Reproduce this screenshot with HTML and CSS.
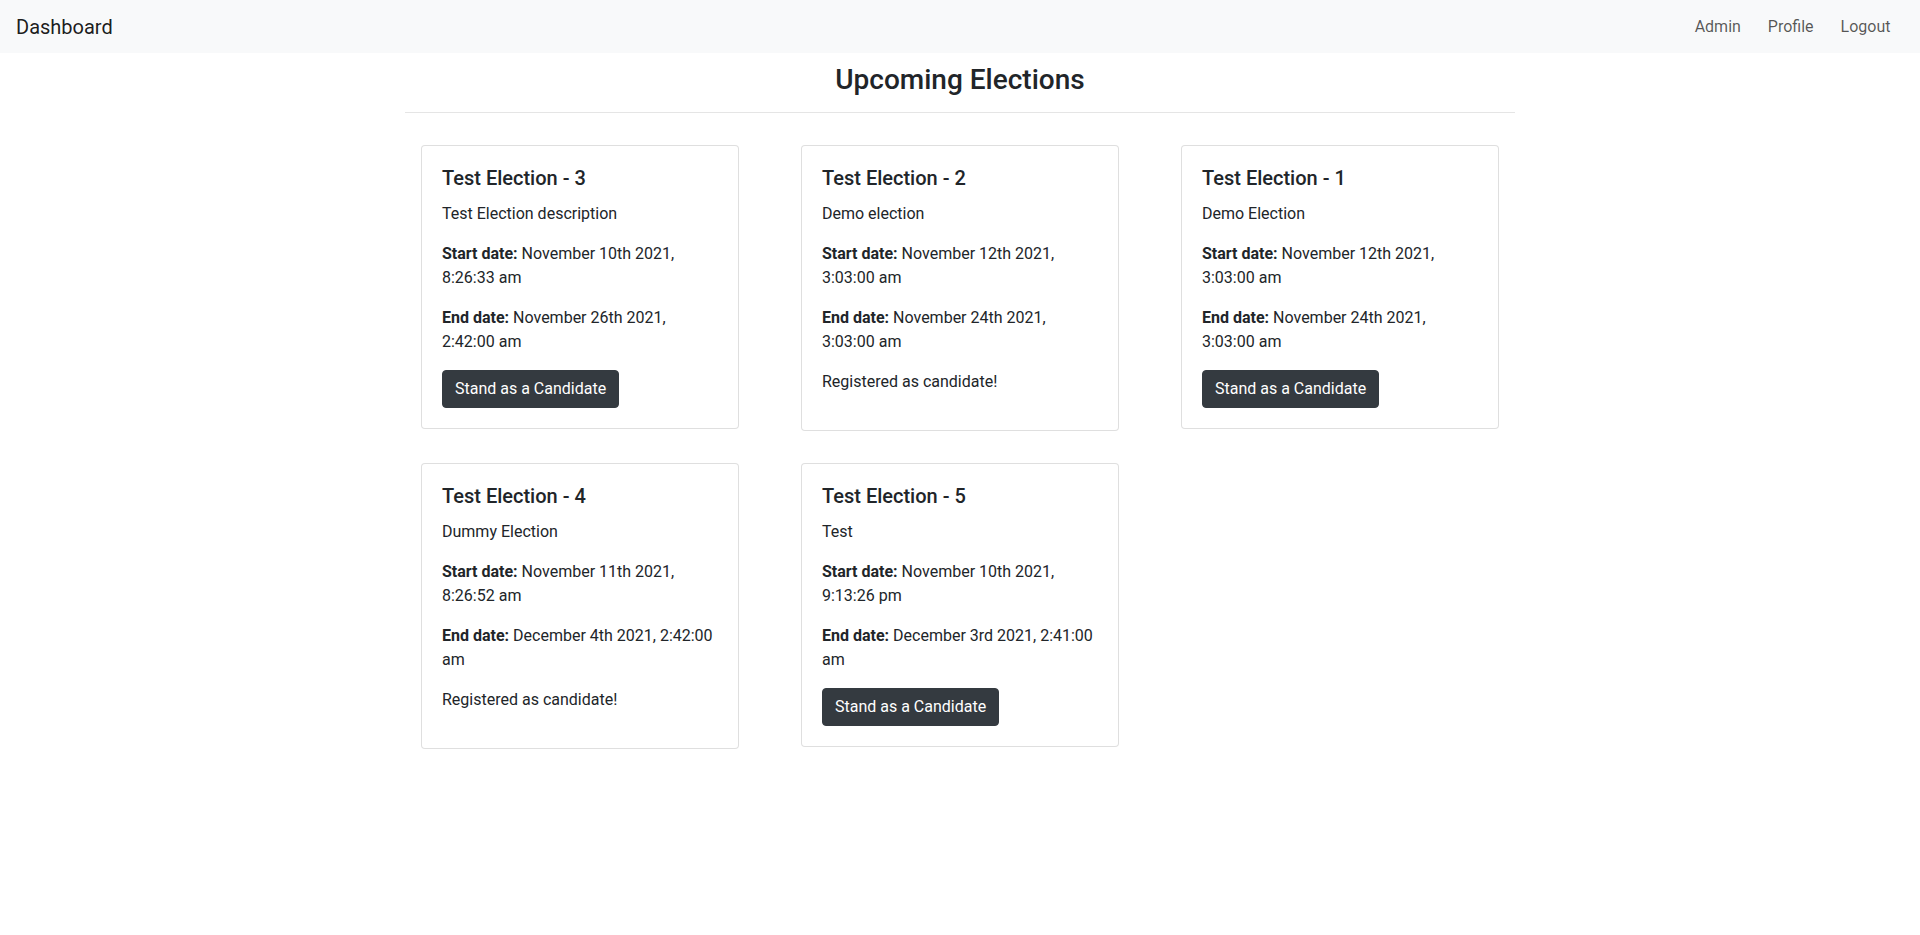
FILE: index.html
```html
<!DOCTYPE html>
<html lang="en">
<head>
<meta charset="utf-8">
<title>Dashboard</title>
<link rel="stylesheet" href="styles.css">
</head>
<body>
<nav class="navbar">
  <a class="brand" href="#">Dashboard</a>
  <ul class="nav-links">
    <li><a class="nav-link" href="#">Admin</a></li>
    <li><a class="nav-link" href="#">Profile</a></li>
    <li><a class="nav-link" href="#">Logout</a></li>
  </ul>
</nav>
<main class="container">
  <h3 class="page-title">Upcoming Elections</h3>
  <hr class="divider">
  <div class="cards">
    <div class="col">
      <div class="card">
        <h5 class="card-title">Test Election - 3</h5>
        <p class="card-text">Test Election description</p>
        <p class="card-text"><strong>Start date:</strong> November 10th 2021, 8:26:33 am</p>
        <p class="card-text"><strong>End date:</strong> November 26th 2021, 2:42:00 am</p>
        <button class="btn">Stand as a Candidate</button>
      </div>
    </div>
    <div class="col">
      <div class="card">
        <h5 class="card-title">Test Election - 2</h5>
        <p class="card-text">Demo election</p>
        <p class="card-text"><strong>Start date:</strong> November 12th 2021, 3:03:00 am</p>
        <p class="card-text"><strong>End date:</strong> November 24th 2021, 3:03:00 am</p>
        <p class="card-text">Registered as candidate!</p>
      </div>
    </div>
    <div class="col">
      <div class="card">
        <h5 class="card-title">Test Election - 1</h5>
        <p class="card-text">Demo Election</p>
        <p class="card-text"><strong>Start date:</strong> November 12th 2021, 3:03:00 am</p>
        <p class="card-text"><strong>End date:</strong> November 24th 2021, 3:03:00 am</p>
        <button class="btn">Stand as a Candidate</button>
      </div>
    </div>
    <div class="col">
      <div class="card">
        <h5 class="card-title">Test Election - 4</h5>
        <p class="card-text">Dummy Election</p>
        <p class="card-text"><strong>Start date:</strong> November 11th 2021, 8:26:52 am</p>
        <p class="card-text"><strong>End date:</strong> December 4th 2021, 2:42:00 am</p>
        <p class="card-text">Registered as candidate!</p>
      </div>
    </div>
    <div class="col">
      <div class="card">
        <h5 class="card-title">Test Election - 5</h5>
        <p class="card-text">Test</p>
        <p class="card-text"><strong>Start date:</strong> November 10th 2021, 9:13:26 pm</p>
        <p class="card-text"><strong>End date:</strong> December 3rd 2021, 2:41:00 am</p>
        <button class="btn">Stand as a Candidate</button>
      </div>
    </div>
  </div>
</main>
</body>
</html>
```
FILE: styles.css
```css
* { box-sizing: border-box; }
body {
  margin: 0;
  font-family: Roboto, "Noto Sans", sans-serif;
  font-size: 16px;
  line-height: 1.5;
  color: #212529;
  background: #fff;
}
.navbar {
  display: flex;
  align-items: center;
  justify-content: space-between;
  height: 53px;
  padding: 0 16px;
  background: #f8f9fa;
}
.brand {
  font-size: 20px;
  line-height: 30px;
  color: rgba(0, 0, 0, 0.9);
  text-decoration: none;
}
.nav-links {
  display: flex;
  list-style: none;
  margin: 0;
  padding: 0;
}
.nav-link {
  display: block;
  padding: 8px 13.5px;
  color: rgba(0, 0, 0, 0.66);
  text-decoration: none;
}
.container {
  width: 1140px;
  margin: 0 auto;
  padding: 0 15px;
}
.page-title {
  margin: 10px 0 0;
  font-size: 28px;
  font-weight: 500;
  line-height: 1.2;
  text-align: center;
}
.divider {
  margin: 15px 0 16px;
  border: 0;
  border-top: 1px solid rgba(0, 0, 0, 0.1);
}
.cards {
  display: grid;
  grid-template-columns: repeat(3, 1fr);
  margin: 0 -15px;
}
.col {
  padding: 0 15px;
}
.card {
  margin: 16px;
  padding: 20px;
  border: 1px solid rgba(0, 0, 0, 0.125);
  border-radius: 4px;
  background: #fff;
}
.card-title {
  margin: 0 0 12px;
  font-size: 20px;
  font-weight: 500;
  line-height: 1.2;
}
.card-text {
  margin: 0 0 16px;
}
.card-text strong {
  font-weight: 700;
}
.btn {
  display: inline-block;
  padding: 6px 12px;
  font-family: inherit;
  font-size: 16px;
  line-height: 24px;
  color: #fff;
  background: #343a40;
  border: 1px solid #343a40;
  border-radius: 4px;
  cursor: pointer;
}
```
